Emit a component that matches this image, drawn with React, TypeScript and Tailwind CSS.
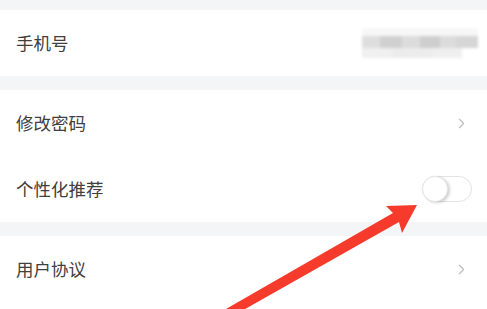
import { ChevronRight } from 'lucide-react';

const Row = ({ label, children }: { label: string; children?: React.ReactNode }) => (
  <div className="flex h-[66px] items-center justify-between bg-white pl-4 pr-[15px]">
    <span className="text-[17.5px] text-[#404040]">{label}</span>
    {children}
  </div>
);

const Chevron = () => <ChevronRight className="mr-[2px] h-[17px] w-[17px] text-[#bcbcbc]" strokeWidth={1.6} />;

const Toggle = () => (
  <div className="flex h-[26px] w-[50px] items-center rounded-full border border-[#e3e3e3] bg-white">
    <div className="h-[26px] w-[26px] -ml-px rounded-full border border-[#e6e6e6] bg-white shadow-[2px_1px_3px_rgba(0,0,0,0.18)]" />
  </div>
);

const Masked = () => (
  <div className="mr-[-6px] flex w-[116px] flex-col blur-[1.5px]">
    <div className="h-[8px] bg-[#f7f7f7]" />
    <div className="flex h-[12px]">
      <div className="w-[18px] bg-[#dedede]" />
      <div className="w-[22px] bg-[#d0d0d0]" />
      <div className="w-[18px] bg-[#dcdcdc]" />
      <div className="w-[20px] bg-[#cecece]" />
      <div className="w-[16px] bg-[#dcdcdc]" />
      <div className="w-[22px] bg-[#d6d6d6]" />
    </div>
    <div className="flex h-[10px]">
      <div className="w-[30px] bg-[#f0f0f0]" />
      <div className="w-[40px] bg-[#ececec]" />
      <div className="w-[30px] bg-[#efefef]" />
    </div>
  </div>
);

export default function App() {
  return (
    <div
      className="relative h-[309px] w-[487px] overflow-hidden bg-[#f4f5f7]"
      style={{ fontFamily: '"Noto Sans CJK SC", "Noto Sans", sans-serif' }}
    >
      <div className="flex flex-col pt-[10px]">
        <Row label="手机号">
          <Masked />
        </Row>
        <div className="h-[14px]" />
        <Row label="修改密码">
          <Chevron />
        </Row>
        <Row label="个性化推荐">
          <Toggle />
        </Row>
        <div className="h-[14px]" />
        <Row label="用户协议">
          <Chevron />
        </Row>
        <div className="h-[20px] bg-white" />
      </div>
      <svg className="pointer-events-none absolute left-0 top-0" width="487" height="309" viewBox="0 0 487 309">
        <polygon
          fill="#f63a2c"
          points="226,309 393,213 386,206 417,205 402,233 399,222 231,317"
        />
      </svg>
    </div>
  );
}
